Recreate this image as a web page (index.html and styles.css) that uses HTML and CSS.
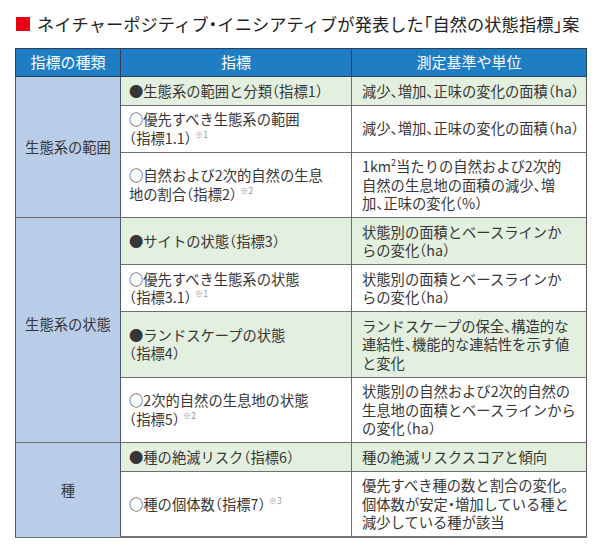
FILE: index.html
```html
<!DOCTYPE html>
<html lang="ja">
<head>
<meta charset="utf-8">
<link rel="stylesheet" href="styles.css">
</head>
<body>
<div class="page">
  <h1 class="title"><span class="mark"></span>ネイチャーポジティブ・イニシアティブが発表した「自然の状態指標」案</h1>
  <table class="tbl">
    <colgroup><col class="c1"><col class="c2"><col class="c3"></colgroup>
    <thead>
      <tr><th>指標の種類</th><th>指標</th><th>測定基準や単位</th></tr>
    </thead>
    <tbody>
      <tr class="g">
        <td class="kind" rowspan="3">生態系の範囲</td>
        <td class="ind">●生態系の範囲と分類（指標1）</td>
        <td class="met">減少、増加、正味の変化の面積（ha）</td>
      </tr>
      <tr>
        <td class="ind">○優先すべき生態系の範囲<br>（指標1.1）<sup>※1</sup></td>
        <td class="met">減少、増加、正味の変化の面積（ha）</td>
      </tr>
      <tr>
        <td class="ind">○自然および2次的自然の生息<br>地の割合（指標2）<sup>※2</sup></td>
        <td class="met">1km<span class="sq">2</span>当たりの自然および2次的<br>自然の生息地の面積の減少、増<br>加、正味の変化（%）</td>
      </tr>
      <tr class="g">
        <td class="kind up" rowspan="4">生態系の状態</td>
        <td class="ind">●サイトの状態（指標3）</td>
        <td class="met">状態別の面積とベースラインか<br>らの変化（ha）</td>
      </tr>
      <tr>
        <td class="ind">○優先すべき生態系の状態<br>（指標3.1）<sup>※1</sup></td>
        <td class="met">状態別の面積とベースラインか<br>らの変化（ha）</td>
      </tr>
      <tr class="g">
        <td class="ind">●ランドスケープの状態<br>（指標4）</td>
        <td class="met">ランドスケープの保全、構造的な<br>連結性、機能的な連結性を示す値<br>と変化</td>
      </tr>
      <tr>
        <td class="ind">○2次的自然の生息地の状態<br>（指標5）<sup>※2</sup></td>
        <td class="met">状態別の自然および2次的自然の<br>生息地の面積とベースラインから<br>の変化（ha）</td>
      </tr>
      <tr class="g">
        <td class="kind" rowspan="2">種</td>
        <td class="ind">●種の絶滅リスク（指標6）</td>
        <td class="met">種の絶滅リスクスコアと傾向</td>
      </tr>
      <tr class="last">
        <td class="ind">○種の個体数（指標7）<sup>※3</sup></td>
        <td class="met">優先すべき種の数と割合の変化。<br>個体数が安定・増加している種と<br>減少している種が該当</td>
      </tr>
    </tbody>
  </table>
</div>
</body>
</html>
```

FILE: styles.css
```css
html, body {
  margin: 0;
  padding: 0;
  background: #ffffff;
}
body {
  font-family: "Noto Sans CJK JP", "Noto Sans", sans-serif;
  color: #363636;
  font-feature-settings: "halt";
}
.page {
  padding: 12px 14px 0 15px;
}
.title {
  display: flex;
  align-items: center;
  gap: 7px;
  margin: 0 0 12px 1px;
  font-size: 17.2px;
  font-weight: 400;
  line-height: 24px;
  color: #222222;
  letter-spacing: 0.1px;
  white-space: nowrap;
}
.mark {
  display: inline-block;
  width: 14px;
  height: 14px;
  background: #e60012;
  flex: none;
}
.tbl {
  width: 571px;
  border-collapse: collapse;
  table-layout: fixed;
  font-size: 14.3px;
  line-height: 18.5px;
}
.c1 { width: 105px; }
.c2 { width: 231px; }
.c3 { width: 235px; }
.tbl th {
  background: #1f7dc4;
  color: #ffffff;
  font-weight: 400;
  font-size: 15px;
  height: 27px;
  padding: 0;
  border: 1px solid #2b3f55;
  text-align: center;
  vertical-align: middle;
}
.tbl td {
  border: 1px solid #6e6e6e;
  padding: 4.5px 6px 4.5px 8px;
  vertical-align: middle;
  white-space: nowrap;
}
.tbl td.kind {
  background: #b9cde9;
  text-align: center;
  padding: 0;
  border-left: 1px solid #4a5868;
  border-right: 1px solid #4a5868;
}
.tbl td.kind.up {
  padding-bottom: 12px;
}
.tbl td.met {
  padding-left: 10px;
  border-right: 1px solid #555555;
}
.tbl tr.g td.ind,
.tbl tr.g td.met {
  background: #e3efdf;
}
.tbl tr.last td {
  border-bottom: 2px solid #777777;
}
.tbl sup {
  font-size: 8.5px;
  line-height: 0;
  color: #9a9a9a;
  vertical-align: 6px;
  margin-left: 3px;
}
.sq {
  font-size: 9px;
  line-height: 0;
  vertical-align: 6px;
}
```
